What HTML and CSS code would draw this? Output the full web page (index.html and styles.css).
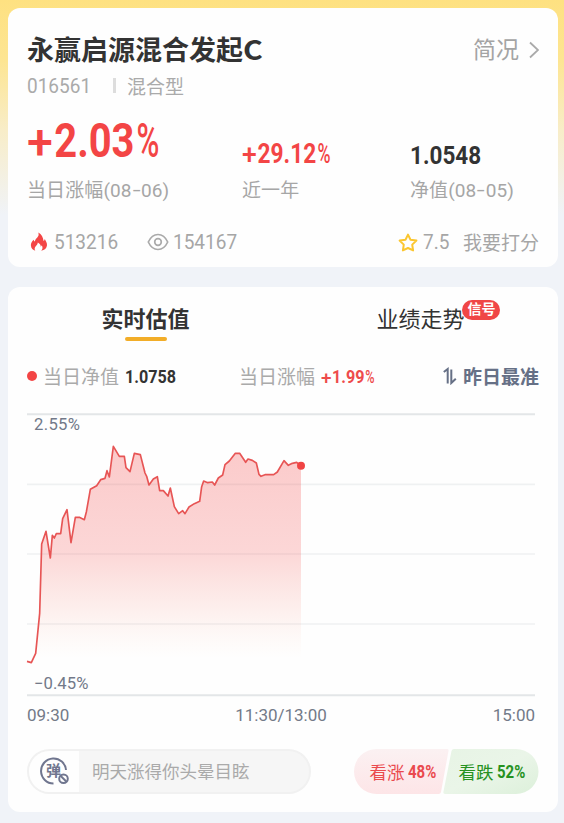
FILE: index.html
```html
<!DOCTYPE html>
<html lang="zh-CN">
<head>
<meta charset="utf-8">
<title>永赢启源混合发起C</title>
<link rel="stylesheet" href="styles.css">
</head>
<body>
<main class="page">
  <section class="card summary">
    <header class="head">
      <h1 class="name">永赢启源混合发起<span class="cls">C</span></h1>
      <a class="brief">简况<svg width="12" height="18" viewBox="0 0 12 18"><path d="M3 1.500 11 9 3 16.500"/></svg></a>
    </header>
    <div class="meta"><span class="code"><span class="digits">016561</span></span><i class="bar"></i><span>混合型</span></div>
    <div class="stats">
      <div class="stat day"><div class="value"><b><i class="plus">+</i>2.03<i class="pct">%</i></b></div><div class="label">当日涨幅(08<s>-</s>06)</div></div>
      <div class="stat year"><div class="value"><b><i class="plus">+</i>29.12<i class="pct">%</i></b></div><div class="label">近一年</div></div>
      <div class="stat nav"><div class="value"><b>1.0548</b></div><div class="label">净值(08<s>-</s>05)</div></div>
    </div>
    <div class="social">
      <svg class="fire" width="18" height="20" viewBox="0 0 18 20"><path d="M8.300.4c.7 2 .4 3.500-1 5C5.800 7 5 8 4.900 9.600 4.200 9.200 3.900 8.600 3.700 7.700 1.900 9.400.7 11.200.9 13.600c.2 2.800 2 4.500 4.500 5.200-1.200-1.700-.9-3.400.5-4.900 1-1 1.800-1.900 1.900-3.400 2.200 1.200 3.100 2.700 2.900 4.300.6-.3.9-.9 1-1.500 1.300 2.200 1 4.100-.5 5.500 3.300-.5 5.600-2.500 5.800-5.500.2-2.500-1.300-4.300-2.200-6.200-.2 1-.6 1.600-1.300 2C13.300 5.400 11.500 2 8.300.4Z"/></svg>
      <span class="count hot"><span class="digits">513216</span></span>
      <svg class="eye" width="22" height="18" viewBox="0 0 22 18"><path d="M1.300 9C3.500 4.200 7 1.500 11 1.500S18.500 4.200 20.700 9C18.500 13.800 15 16.500 11 16.500S3.500 13.800 1.300 9Z"/><circle cx="11" cy="9" r="3.300"/></svg>
      <span class="count seen"><span class="digits">154167</span></span>
      <svg class="star" width="20" height="19" viewBox="0 0 20 19"><path d="m10 1.600 2.500 5.100 5.900.9-4.200 4 .9 5.800L10 15l-5.100 2.400.9-5.800-4.200-4 5.900-.9Z"/></svg>
      <span class="count rate"><span class="digits">7.5</span></span>
      <span class="action">我要打分</span>
    </div>
  </section>

  <section class="card trend">
    <nav class="tabs">
      <div class="tab active">实时估值</div>
      <div class="tab"><span class="anchor">业绩走势<em class="badge">信号</em></span></div>
    </nav>
    <div class="legend">
      <i class="dot"></i><span class="key">当日净值</span><b class="num nav-now">1.0758</b>
      <span class="key second">当日涨幅</span><b class="num up"><i class="plus">+</i>1.99<i class="pct">%</i></b>
      <span class="accurate"><svg width="14" height="18" viewBox="0 0 14 18"><path d="M.8 5 4.700 2v14.500M8.300 2.500V16L12.800 11.800"/></svg>昨日最准</span>
    </div>
    <svg class="chart" width="508" height="300" viewBox="81 0 1524 900">
      <defs><linearGradient id="fade" x1="0" y1="139" x2="0" y2="775" gradientUnits="userSpaceOnUse"><stop offset="0" stop-color="#f44b4b" stop-opacity=".29"/><stop offset=".5" stop-color="#f44b4b" stop-opacity=".22"/><stop offset=".78" stop-color="#f4604b" stop-opacity=".09"/><stop offset="1" stop-color="#f8a070" stop-opacity="0"/></linearGradient></defs>
      <path class="edge" d="M81 43H1605M81 886H1605"/>
      <path class="grid" d="M81 253H1605M81 462H1605M81 672H1605"/>
      <path fill="url(#fade)" d="M81 784 94 788 107 760 119 640 125 432 138 394 151 474 157 406 163 414 169 401 182 401 188 356 201 329 213 428 226 352 238 352 253 359 259 336 271 268 290 257 302 239 315 235 321 212 328 231 340 139 358 169 373 169 378 203 390 215 403 160 421 164 435 219 440 229 447 255 460 237 472 230 479 272 490 272 504 288 511 264 523 320 536 341 548 332 555 341 567 321 583 311 599 304 605 260 611 243 623 248 637 246 644 255 655 234 668 225 675 194 688 183 706 160 719 160 737 187 744 177 757 181 769 189 777 223 783 229 795 224 821 224 832 216 852 182 865 196 877 190 890 187 903 197V788H81Z"/>
      <path class="line" d="M81 784 94 788 107 760 119 640 125 432 138 394 151 474 157 406 163 414 169 401 182 401 188 356 201 329 213 428 226 352 238 352 253 359 259 336 271 268 290 257 302 239 315 235 321 212 328 231 340 139 358 169 373 169 378 203 390 215 403 160 421 164 435 219 440 229 447 255 460 237 472 230 479 272 490 272 504 288 511 264 523 320 536 341 548 332 555 341 567 321 583 311 599 304 605 260 611 243 623 248 637 246 644 255 655 234 668 225 675 194 688 183 706 160 719 160 737 187 744 177 757 181 769 189 777 223 783 229 795 224 821 224 832 216 852 182 865 196 877 190 890 187 903 197"/>
      <circle cx="903" cy="197" r="12" fill="#f04444"/>
      <text x="102" y="90" textLength="138">2.55%</text>
      <text x="102" y="866" textLength="163">−0.45%</text>
    </svg>
    <div class="times"><span>09:30</span><span>11:30/13:00</span><span>15:00</span></div>
    <footer class="foot">
      <div class="comment">
        <div class="toggle"><svg width="32" height="30" viewBox="0 0 32 30"><path class="ring" d="M15.500 27.500A12.500 12.500 0 1 1 28 14"/><text x="15.500" y="20" text-anchor="middle">弹</text><circle cx="25.500" cy="22.800" r="4.300"/><path d="m22.500 19.800 6 6"/></svg></div>
        <span class="hint">明天涨得你头晕目眩</span>
      </div>
      <div class="vote">
        <svg class="shape" width="185" height="45" viewBox="0 0 185 45"><defs><linearGradient id="red" x2="0" y2="1"><stop stop-color="#fbf1f2"/><stop offset="1" stop-color="#fde5e7"/></linearGradient><linearGradient id="green" x2="1" y2="1"><stop stop-color="#e7f4e5"/><stop offset=".5" stop-color="#eaf5e8"/><stop offset="1" stop-color="#dcf0da"/></linearGradient></defs><path fill="url(#red)" d="M22.500 0H93q2 0 1.500 2L87 43q-.4 2-2.400 2H22.500a22.500 22.500 0 0 1 0-45Z"/><path fill="url(#green)" d="M100 0H162a22.500 22.500 0 0 1 0 45H91q-2 0-1.600-2L97.500 2q.5-2 2.500-2Z"/></svg>
        <span class="bull">看涨<b>48%</b></span><span class="bear">看跌<b>52%</b></span>
      </div>
    </footer>
  </section>
</main>
</body>
</html>
```
FILE: styles.css
```css
* { box-sizing: border-box; }
body {
  margin: 0;
  height: 823px;
  overflow: hidden;
  background: #f0f3f8 linear-gradient(180deg, #fee181 0, #fde592 60px, #f8edc8 130px, #f0f3f8 215px) no-repeat;
  font-family: Roboto, "Noto Sans CJK SC", sans-serif;
  color: #333;
}
h1, s, i, em { margin: 0; font-style: normal; text-decoration: none; }
svg { display: block; flex: none; fill: none; }
.page { padding: 8px 6px 0 8px; display: grid; gap: 20px; }
.card { background: #fefefe; border-radius: 12px; padding: 0 19px; }
.summary { height: 259px; padding-top: 22px; }
.head { display: flex; justify-content: space-between; height: 38px; line-height: 38px; }
.name { font: 700 27px/38px "Noto Sans CJK SC", sans-serif; white-space: nowrap; }
.cls { display: inline-block; transform: scaleX(1.12); transform-origin: left; }
.brief { display: flex; align-items: center; gap: 8px; height: 42px; font-size: 23px; color: #a4a4a4; }
.brief svg { stroke: #aaa; stroke-width: 1.8; margin-top: -2px; }
.meta { display: flex; align-items: center; height: 35px; font-size: 19px; color: #aaa; }
.digits { display: inline-block; font-size: 20px; line-height: 28px; transform: scaleX(.95); transform-origin: left; }
.code { width: 86px; }
.bar { width: 3px; height: 15px; background: #ddd; margin-right: 11px; }
.stats { display: flex; height: 120px; padding-top: 12px; }
.stat { white-space: nowrap; }
.day { width: 215px; }
.year { width: 168px; }
.value { height: 62px; display: flex; align-items: flex-end; }
.value b { display: block; transform-origin: left; color: #f34545; }
.plus, .pct { display: inline-block; font-weight: 500; transform-origin: left; }
.plus { transform: translateY(.05em) scaleX(1.17); margin-right: .13em; }
.pct { transform: scaleX(.78); margin-left: .05em; }
.day b { font-size: 48px; line-height: 62px; transform: translateY(-5px) scaleX(.83); }
.year b { font-size: 27px; line-height: 37px; transform: translateY(-4px) scaleX(.84); }
.nav b { font-size: 26.500px; line-height: 35px; transform: translateY(-5px) scaleX(.85); color: #333; }
.label { font-size: 19px; line-height: 28px; color: #a6a6a6; letter-spacing: .1px; }
.label s { display: inline-block; transform: translateY(-1px) scaleX(1.5); margin: 0 2px; }
.social { display: flex; align-items: center; height: 38px; padding-left: 3px; font-size: 19px; color: #a6a6a6; }
.fire { fill: #f34545; margin-right: 6px; }
.eye { stroke: #aaa; stroke-width: 1.7; margin-right: 4px; }
.star { stroke: #fbc62f; stroke-width: 2; stroke-linejoin: round; margin-left: auto; margin-right: 5px; }
.hot { width: 93px; }
.rate { width: 40px; }
.action { margin-top: -2px; }
.trend { height: 525px; padding-top: 11px; }
.tabs { display: grid; grid-template-columns: 237px 1fr; height: 54px; }
.tab { text-align: center; font-size: 22px; line-height: 43px; position: relative; }
.tab.active { font-weight: 700; }
.tab.active::after { content: ""; display: block; width: 42px; height: 4px; margin: -4px auto 0; border-radius: 2px; background: #f2ad28; }
.anchor { position: relative; margin-left: 38px; }
.badge { position: absolute; left: 86px; top: -7px; width: 38px; height: 20px; border-radius: 10px; background: #f04646; color: #fff; font-size: 14px; font-weight: 700; line-height: 19px; }
.legend { display: flex; align-items: center; height: 48px; font-size: 19px; white-space: nowrap; }
.dot { width: 10px; height: 10px; border-radius: 50%; background: #f34545; margin-right: 6px; }
.key { color: #aaa; margin-top: -2px; }
.num { display: block; font-size: 19px; transform-origin: left; transform: scaleX(.85); margin-left: 6px; }
.nav-now { width: 114px; }
.up { color: #ee4b4b; }
.accurate { display: flex; align-items: center; gap: 6px; margin: -2px 0 0 auto; font-weight: 700; color: #667086; }
.accurate svg { stroke: #667086; stroke-width: 2; margin-top: 1px; }
.chart { overflow: visible; }
.edge { stroke: #e3e6e8; stroke-width: 6; }
.grid { stroke: #eff1f2; stroke-width: 5; }
.line { stroke: #e75555; stroke-width: 5; stroke-linejoin: round; }
.chart text { font-size: 50px; fill: #727989; }
.times { display: flex; justify-content: space-between; height: 30px; width: 508px; font-size: 17px; line-height: 30px; color: #737a88; }
.foot { display: flex; justify-content: space-between; margin-top: 19px; height: 45px; }
.comment { display: flex; align-items: center; width: 284px; border: 2px solid #f1f1f1; border-radius: 23px; background: #f6f6f6; overflow: hidden; }
.toggle { width: 50px; height: 41px; background: #fefefe; padding: 5px 0 0 9px; }
.toggle svg { stroke: #70768f; stroke-width: 2; }
.toggle text { font-size: 15px; font-weight: 700; fill: #70768f; stroke: none; }
.hint { margin: -2px 0 0 13px; font-size: 17.500px; color: #aaa; }
.vote { position: relative; display: flex; align-items: center; width: 185px; font-size: 17.500px; white-space: nowrap; }
.shape { position: absolute; inset: 0; }
.bull, .bear { position: relative; display: flex; align-items: center; margin-top: -1px; padding-left: 15.500px; width: 89px; color: #ea4a4e; }
.bear { color: #26921f; }
.vote b { display: block; margin-left: 3px; font-size: 19px; transform: scaleX(.79); transform-origin: left; }
```
